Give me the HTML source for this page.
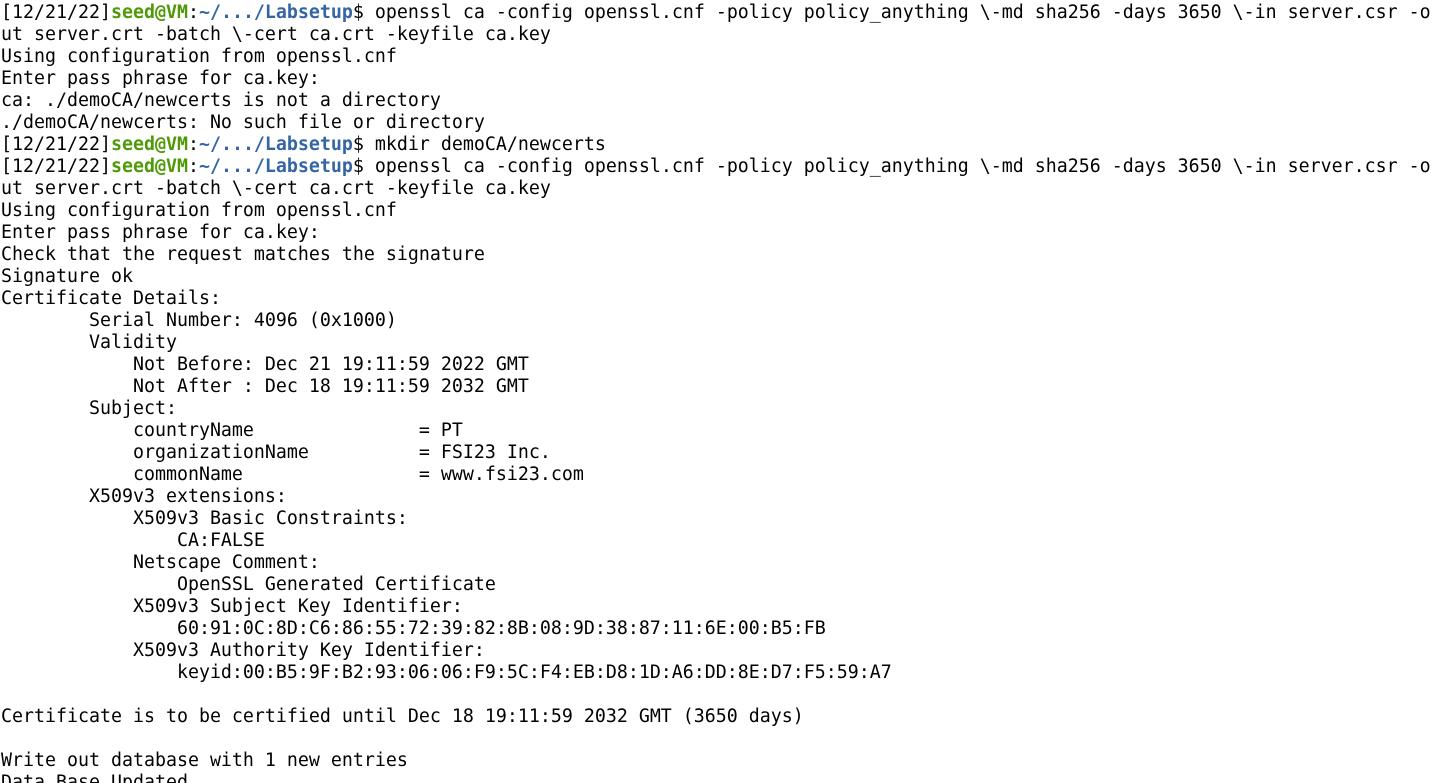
<!DOCTYPE html>
<html><head><meta charset="utf-8"><style>
html,body{margin:0;padding:0;background:#fff;width:1435px;height:783px;overflow:hidden}
pre{margin:0;padding:2px 0 0 1px;font-family:"DejaVu Sans Mono","Liberation Mono",monospace;font-size:18.27px;line-height:22px;color:#000;white-space:pre}
.g{color:#4e9a06;font-weight:bold}.b{color:#3465a4;font-weight:bold}
</style></head><body><pre>[12/21/22]<span class="g">seed@VM</span>:<span class="b">~/.../Labsetup</span>$ openssl ca -config openssl.cnf -policy policy_anything \-md sha256 -days 3650 \-in server.csr -o
ut server.crt -batch \-cert ca.crt -keyfile ca.key
Using configuration from openssl.cnf
Enter pass phrase for ca.key:
ca: ./demoCA/newcerts is not a directory
./demoCA/newcerts: No such file or directory
[12/21/22]<span class="g">seed@VM</span>:<span class="b">~/.../Labsetup</span>$ mkdir demoCA/newcerts
[12/21/22]<span class="g">seed@VM</span>:<span class="b">~/.../Labsetup</span>$ openssl ca -config openssl.cnf -policy policy_anything \-md sha256 -days 3650 \-in server.csr -o
ut server.crt -batch \-cert ca.crt -keyfile ca.key
Using configuration from openssl.cnf
Enter pass phrase for ca.key:
Check that the request matches the signature
Signature ok
Certificate Details:
        Serial Number: 4096 (0x1000)
        Validity
            Not Before: Dec 21 19:11:59 2022 GMT
            Not After : Dec 18 19:11:59 2032 GMT
        Subject:
            countryName               = PT
            organizationName          = FSI23 Inc.
            commonName                = www.fsi23.com
        X509v3 extensions:
            X509v3 Basic Constraints: 
                CA:FALSE
            Netscape Comment: 
                OpenSSL Generated Certificate
            X509v3 Subject Key Identifier: 
                60:91:0C:8D:C6:86:55:72:39:82:8B:08:9D:38:87:11:6E:00:B5:FB
            X509v3 Authority Key Identifier: 
                keyid:00:B5:9F:B2:93:06:06:F9:5C:F4:EB:D8:1D:A6:DD:8E:D7:F5:59:A7

Certificate is to be certified until Dec 18 19:11:59 2032 GMT (3650 days)

Write out database with 1 new entries
Data Base Updated</pre></body></html>
